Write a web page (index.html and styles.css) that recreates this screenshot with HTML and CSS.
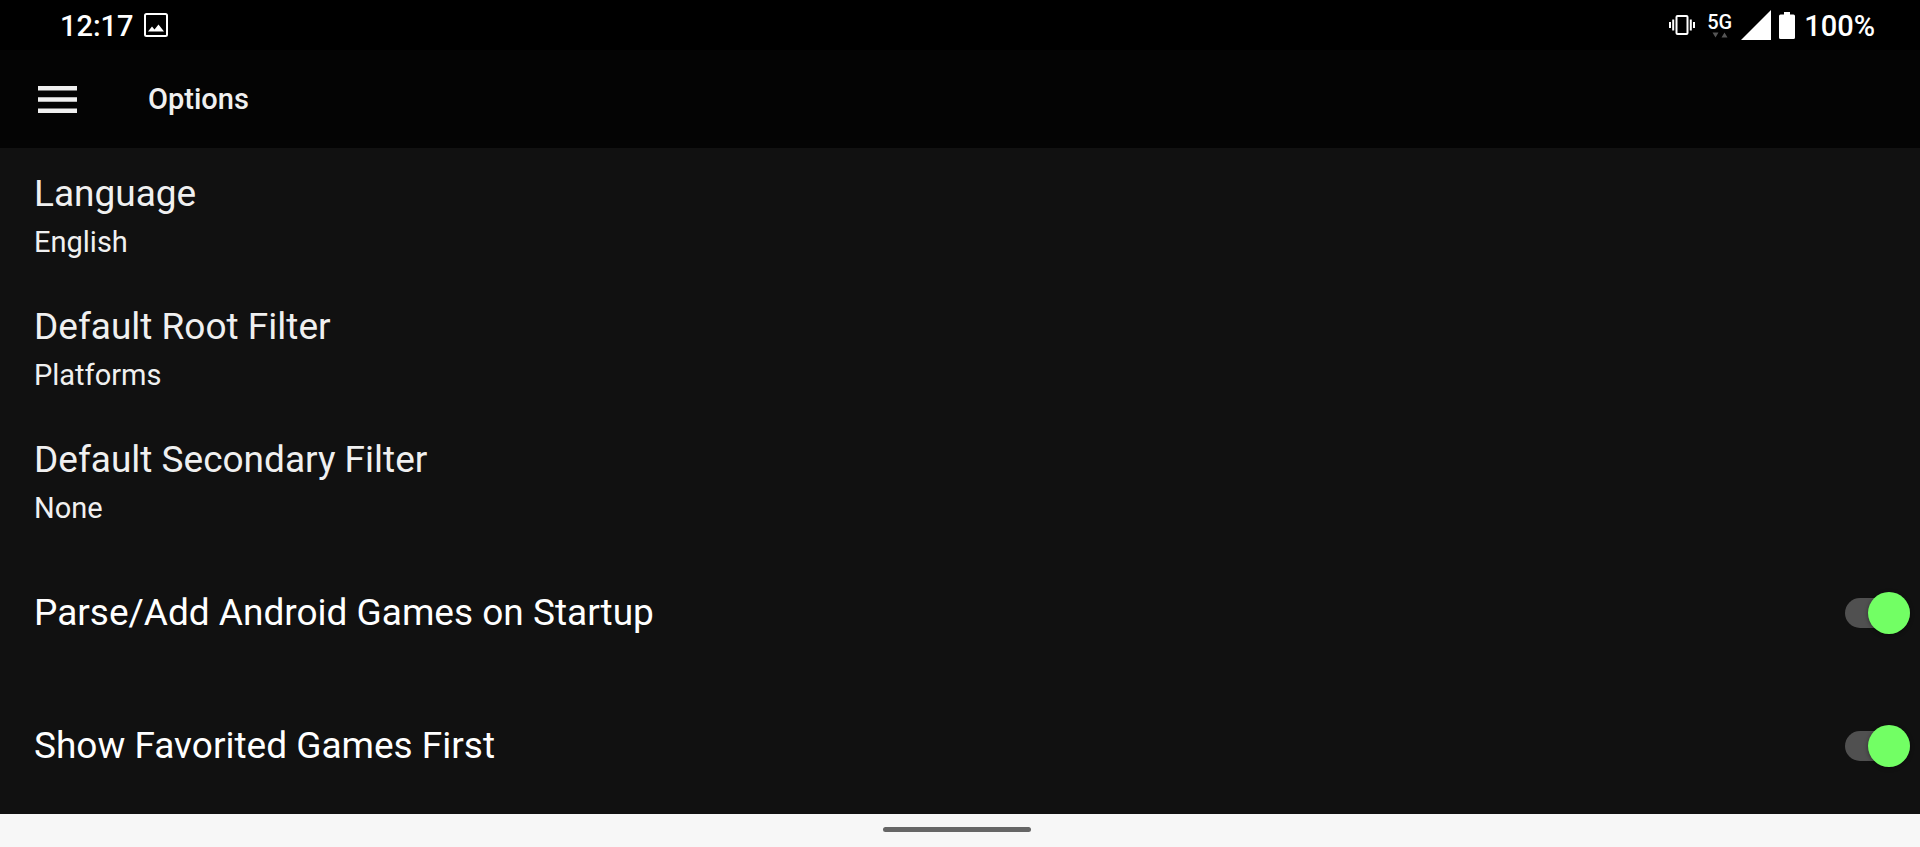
FILE: index.html
```html
<!DOCTYPE html>
<html lang="en">
<head>
  <meta charset="UTF-8">
  <meta name="viewport" content="width=device-width, initial-scale=1.0">
  <title>Options</title>
  <link rel="stylesheet" href="styles.css">
</head>
<body>
  <div class="status-bar">
    <div class="status-left">
      <span class="status-text">12:17</span>
      <svg class="icon-image" width="24" height="24" viewBox="0 0 24 24" aria-hidden="true">
        <rect x="1" y="1" width="22" height="22" rx="1.5" fill="none" stroke="#fff" stroke-width="2"/>
        <path d="M4 18.5 L8 13.5 L10.5 16.5 L14.5 11.5 L20 18.5 Z" fill="#fff"/>
      </svg>
    </div>
    <div class="status-right">
      <svg class="icon-vibrate" width="26" height="20" viewBox="0 0 26 20" aria-hidden="true">
        <rect x="7.5" y="1" width="11" height="18" rx="1" fill="none" stroke="#fff" stroke-width="2"/>
        <path d="M4.2 4.5V15.5M1 7V13M21.8 4.5V15.5M25 7V13" stroke="#fff" stroke-width="2"/>
      </svg>
      <div class="network">
        <span>5G</span>
        <svg width="16" height="6" viewBox="0 0 16 6" aria-hidden="true">
          <path d="M0.5 0.5H6.5L3.5 5.5ZM9.5 5.5H15.5L12.5 0.5Z" fill="#555"/>
        </svg>
      </div>
      <svg class="icon-signal" width="30" height="30" viewBox="0 0 30 30" aria-hidden="true">
        <path d="M30 0V30H0Z" fill="#fff"/>
      </svg>
      <svg class="icon-battery" width="16" height="27" viewBox="0 0 16 27" aria-hidden="true">
        <path d="M5 0H11V2.5H14.5Q16 2.5 16 4V25.5Q16 27 14.5 27H1.5Q0 27 0 25.5V4Q0 2.5 1.5 2.5H5Z" fill="#fff"/>
      </svg>
      <span class="status-text">100%</span>
    </div>
  </div>

  <header class="app-bar">
    <button type="button" class="menu-btn" aria-label="Menu">
      <svg width="39" height="27" viewBox="0 0 39 27" aria-hidden="true">
        <path d="M0 2.3H39M0 13.5H39M0 24.7H39" stroke="#f0f0f0" stroke-width="4.4"/>
      </svg>
    </button>
    <h1>Options</h1>
  </header>

  <main class="options">
    <button type="button" class="option">
      <span class="option-title">Language</span>
      <span class="option-value">English</span>
    </button>
    <button type="button" class="option">
      <span class="option-title">Default Root Filter</span>
      <span class="option-value">Platforms</span>
    </button>
    <button type="button" class="option">
      <span class="option-title">Default Secondary Filter</span>
      <span class="option-value">None</span>
    </button>
    <div class="option-switch">
      <label class="option-title" for="parseGames">Parse/Add Android Games on Startup</label>
      <input type="checkbox" class="switch" id="parseGames" checked>
    </div>
    <div class="option-switch">
      <label class="option-title" for="favoritesFirst">Show Favorited Games First</label>
      <input type="checkbox" class="switch" id="favoritesFirst" checked>
    </div>
  </main>

  <footer class="nav-bar">
    <div class="nav-handle"></div>
  </footer>
</body>
</html>
```
FILE: styles.css
```css
* { margin: 0; padding: 0; box-sizing: border-box; }
body {
  display: flex;
  flex-direction: column;
  min-height: 100vh;
  font-family: Roboto, sans-serif;
  background: #111;
  color: #f0f0f0;
}
svg {
  display: block;
}
button {
  background: none;
  border: none;
  color: inherit;
  font-family: inherit;
  cursor: pointer;
}

/* Status bar */
.status-bar {
  display: flex;
  justify-content: space-between;
  align-items: center;
  height: 50px;
  padding: 0 45px 0 60px;
  background: #000;
  color: #fff;
}
.status-left, .status-right {
  display: flex;
  align-items: center;
}
.status-left {
  gap: 10px;
}
.status-text {
  padding-top: 2px;
  font-size: 29px;
  line-height: 34px;
  font-weight: 500;
}
.network {
  display: flex;
  flex-direction: column;
  align-items: center;
  margin: 0 9px 0 12px;
  font-size: 20px;
  line-height: 20px;
  font-weight: 500;
}
.icon-battery {
  margin: 0 9px 0 8px;
}

/* App bar */
.app-bar {
  display: flex;
  align-items: center;
  gap: 61px;
  height: 98px;
  padding: 0 28px;
  background: #040404;
}
.menu-btn {
  padding: 10px;
}
.app-bar h1 {
  font-size: 29px;
  line-height: 34px;
  font-weight: 500;
}

/* Options list */
.options {
  flex: 1;
}
.option {
  display: flex;
  flex-direction: column;
  gap: 9px;
  width: 100%;
  height: 133px;
  padding: 24px 34px 0;
  text-align: left;
}
.option-title {
  font-size: 37px;
  line-height: 44px;
}
.option-value {
  font-size: 29px;
  line-height: 34px;
}
.option-switch {
  display: flex;
  justify-content: space-between;
  align-items: center;
  height: 133px;
  padding: 0 10px 2px 34px;
  color: #fff;
}

/* Switch */
.switch {
  position: relative;
  width: 65px;
  height: 30px;
  border-radius: 15px;
  background: #505050;
  appearance: none;
  cursor: pointer;
}
.switch::before {
  content: "";
  position: absolute;
  top: -6px;
  left: 0;
  width: 42px;
  height: 42px;
  border-radius: 50%;
  background: #bbb;
  box-shadow: 0 1px 4px rgba(0,0,0,0.4);
}
.switch:checked::before {
  left: 23px;
  background: #72ff64;
}

/* Gesture bar */
.nav-bar {
  display: flex;
  justify-content: center;
  align-items: center;
  height: 33px;
  padding: 0 6px 2px 0;
  background: #f7f7f7;
}
.nav-handle {
  width: 148px;
  height: 5px;
  border-radius: 3px;
  background: #666;
}
```
